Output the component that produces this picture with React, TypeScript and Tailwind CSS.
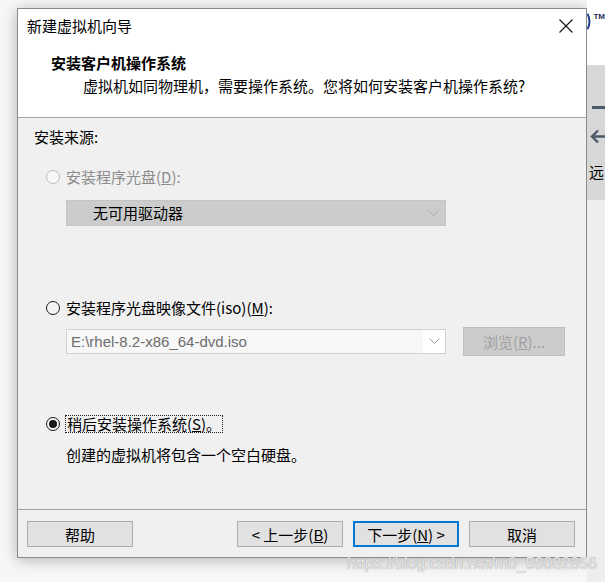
import React from "react";

const CJK = "font-['Noto_Sans_CJK_SC','Noto_Sans',sans-serif]";

function Radio({ checked, disabled }: { checked?: boolean; disabled?: boolean }) {
  return (
    <span
      className={`w-[14px] h-[14px] rounded-full border flex items-center justify-center shrink-0 ${
        disabled ? "border-[#bcbcbc] bg-[#f7f7f7]" : "border-[#1a1a1a] bg-[#f4f4f4]"
      }`}
    >
      {checked && <span className="w-[8px] h-[8px] rounded-full bg-[#1a1a1a]" />}
    </span>
  );
}

function Chevron({ color }: { color: string }) {
  return (
    <svg width="11" height="7" viewBox="0 0 11 7">
      <polyline points="0.5,0.5 5.5,5.5 10.5,0.5" fill="none" stroke={color} strokeWidth="1" />
    </svg>
  );
}

function WizardButton({ children, primary }: { children: React.ReactNode; primary?: boolean }) {
  return (
    <button
      className={`w-[106px] h-[26px] flex items-center justify-center bg-[#e1e1e1] text-[15px] leading-none text-black ${
        primary ? "border-2 border-[#0078d7]" : "border border-[#adadad]"
      }`}
    >
      {children}
    </button>
  );
}

export default function App() {
  return (
    <div className={`relative w-[605px] h-[582px] flex bg-[#f7f7f7] overflow-hidden ${CJK}`}>
      {/* wizard dialog */}
      <div className="pl-[17px] pt-[8px]">
        <div className="w-[570px] h-[550px] border border-[#8a8a8a] bg-[#f0f0f0] flex flex-col shadow-[0_2px_14px_rgba(0,0,0,0.28)]">
          {/* title + page header */}
          <div className="h-[109px] bg-white border-b border-[#a0a0a0] flex flex-col">
            <div className="h-[34px] flex items-center justify-between pl-[9px] pr-[13px]">
              <span className="text-[15px] leading-[20px] text-black">新建虚拟机向导</span>
              <svg width="14" height="14" viewBox="0 0 14 14">
                <path d="M0.5 0.5 L13.5 13.5 M13.5 0.5 L0.5 13.5" stroke="#111" strokeWidth="1.1" />
              </svg>
            </div>
            <div className="mt-[10px] pl-[33px] text-[15px] leading-[20px] font-bold text-black">
              安装客户机操作系统
            </div>
            <div className="mt-[3px] pl-[65px] text-[15px] leading-[20px] text-black">
              虚拟机如同物理机，需要操作系统。您将如何安装客户机操作系统?
            </div>
          </div>

          {/* body */}
          <div className="h-[392px] border-b border-[#a0a0a0] flex flex-col pl-[16px] pt-[9px] text-[15px] leading-[20px] text-black">
            <div>安装来源:</div>

            <div className="mt-[20px] ml-[12px] flex items-center gap-[6px] text-[#8c8c8c]">
              <Radio disabled />
              <span>
                安装程序光盘(<span className="underline">D</span>):
              </span>
            </div>
            <div className="mt-[13px] ml-[32px] w-[380px] h-[26px] bg-[#cccccc] border border-[#c4c4c4] flex items-center justify-between pl-[26px] pr-[6px]">
              <span>无可用驱动器</span>
              <Chevron color="#a8a8a8" />
            </div>

            <div className="mt-[72px] ml-[12px] flex items-center gap-[6px]">
              <Radio />
              <span>
                安装程序光盘映像文件(iso)(<span className="underline">M</span>):
              </span>
            </div>
            <div className="mt-[9px] ml-[32px] flex items-center gap-[17px]">
              <div className="w-[380px] h-[25px] bg-white border border-[#d0d0d0] flex items-center">
                <div className="w-[356px] h-full bg-[#f7f7f7] flex items-center pl-[4px] text-[#6d6d6d] font-['Liberation_Sans','Noto_Sans_CJK_SC',sans-serif]">
                  E:\rhel-8.2-x86_64-dvd.iso
                </div>
                <div className="flex-1 flex items-center justify-center">
                  <Chevron color="#9a9a9a" />
                </div>
              </div>
              <button className="w-[102px] h-[29px] bg-[#cccccc] border border-[#bfbfbf] text-[15px] text-[#a0a0a0] flex items-center justify-center">
                浏览(<span className="underline">R</span>)...
              </button>
            </div>

            <div className="mt-[59px] ml-[12px] flex items-center gap-[5px]">
              <Radio checked />
              <span className="border border-dotted border-[#222] leading-[16px] px-px">
                稍后安装操作系统(<span className="underline">S</span>)。
              </span>
            </div>
            <div className="mt-[12px] ml-[32px]">创建的虚拟机将包含一个空白硬盘。</div>
          </div>

          {/* footer buttons */}
          <div className="flex-1 flex items-start pt-[11px] pl-[9px] pr-[11px]">
            <WizardButton>帮助</WizardButton>
            <div className="flex-1" />
            <div className="flex gap-[10px]">
              <WizardButton>
                &lt; 上一步(<span className="underline">B</span>)
              </WizardButton>
              <WizardButton primary>
                下一步(<span className="underline">N</span>) &gt;
              </WizardButton>
              <WizardButton>取消</WizardButton>
            </div>
          </div>
        </div>
      </div>

      {/* sliver of the window behind */}
      <div className="w-[18px] h-full flex flex-col overflow-hidden whitespace-nowrap">
        <div className="h-[65px] bg-white flex items-start pt-[12px]">
          <svg width="6" height="19" viewBox="0 0 6 19">
            <path d="M0.5 1 Q5 9.5 0.5 18" fill="none" stroke="#1f3f8f" strokeWidth="2.2" />
          </svg>
          <span className="ml-[1px] text-[8px] leading-[10px] font-bold text-[#1f2d5a] font-['Liberation_Sans',sans-serif]">
            TM
          </span>
        </div>
        <div className="h-[135px] bg-[#d7d7d7] flex flex-col items-end">
          <div className="mt-[41px] w-[13px] h-[3px] bg-[#4b5a6b]" />
          <svg className="mt-[20px] ml-[3px]" width="15" height="15" viewBox="0 0 15 15">
            <path d="M8 1.5 L2 7.5 L8 13.5 M2 7.5 L15 7.5" fill="none" stroke="#4b5a6b" strokeWidth="2.4" />
          </svg>
          <div className="mt-[18px] w-full pl-[2px] text-[15px] leading-[20px] text-black">远</div>
        </div>
        <div className="flex-1 bg-[#eeeeee]" />
      </div>

      {/* watermark */}
      <div className="absolute left-[347px] top-[554px] text-[16px] leading-[20px] text-[#e6e6e6] font-['Liberation_Sans',sans-serif] [text-shadow:0_0_1px_#8a8a8a]">
        https://blog.csdn.net/m0_59082856
      </div>
    </div>
  );
}
